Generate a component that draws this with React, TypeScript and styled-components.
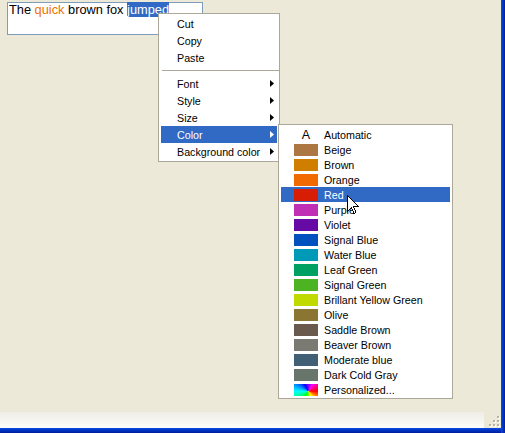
import React from "react";
import styled, { createGlobalStyle } from "styled-components";

const GlobalStyle = createGlobalStyle`
  html, body { margin: 0; padding: 0; background: #ECE9D8; }
  body { font-family: "Liberation Sans", Arial, sans-serif; }
  #root { width: 505px; height: 433px; }
`;

const Window = styled.div`
  position: relative;
  display: flex;
  width: 505px;
  height: 433px;
  overflow: hidden;
  background: #ece9d8;
`;

const Main = styled.div`
  flex: 1;
  display: flex;
  flex-direction: column;
`;

const Content = styled.div`
  flex: 1;
  padding: 2px 0 0 7px;
`;

const TextField = styled.div`
  box-sizing: border-box;
  width: 196px;
  height: 33px;
  border: 1px solid #7f9db9;
  background: #fff;
  padding: 0 1px;
  font-size: 12.8px;
  line-height: 14px;
  color: #000;
  white-space: nowrap;
`;

const Colored = styled.span<{ $color: string }>`
  color: ${(p) => p.$color};
`;

const Selected = styled.span`
  background: #316ac5;
  color: #fff;
`;

const StatusRow = styled.div`
  display: flex;
  height: 16px;
`;

const StatusPanel = styled.div`
  flex: 1;
  background: linear-gradient(#eeede6, #fdfdfa);
`;

const Grip = styled.div`
  width: 17px;
  display: flex;
  align-items: flex-end;
  justify-content: flex-end;
`;

const BottomBorder = styled.div`
  height: 5px;
  background: linear-gradient(#0a4ee0, #0035c8 40%, #001c9c);
`;

const RightBorder = styled.div`
  width: 4px;
  background: linear-gradient(to right, #0a4ee0, #0034c4 50%, #00209e);
`;

const Menu = styled.div<{ $left: number; $top: number; $width: number; $padTop: number }>`
  position: absolute;
  left: ${(p) => p.$left}px;
  top: ${(p) => p.$top}px;
  width: ${(p) => p.$width}px;
  box-sizing: border-box;
  background: #fff;
  border: 1px solid #aca899;
  padding: ${(p) => p.$padTop}px 2px 1px;
  font-size: 10.7px;
  color: #000;
`;

const MenuItem = styled.div<{ $active?: boolean }>`
  height: 17px;
  display: flex;
  align-items: center;
  justify-content: space-between;
  padding: 0 3px 0 16px;
  background: ${(p) => (p.$active ? "#316ac5" : "transparent")};
  color: ${(p) => (p.$active ? "#fff" : "#000")};
  white-space: nowrap;
`;

const Separator = styled.div`
  height: 9px;
  display: flex;
  align-items: center;
  margin-left: 1px;
  margin-right: -2px;
  &::after {
    content: "";
    flex: 1;
    height: 1px;
    background: #aca899;
  }
`;

const ColorItem = styled.div<{ $active?: boolean }>`
  height: 15px;
  display: flex;
  align-items: center;
  gap: 6px;
  padding-left: 13px;
  background: ${(p) => (p.$active ? "#316ac5" : "transparent")};
  color: ${(p) => (p.$active ? "#fff" : "#000")};
  white-space: nowrap;
`;

const Swatch = styled.div<{ $bg: string }>`
  width: 24px;
  height: 12px;
  background: ${(p) => p.$bg};
`;

const AutoGlyph = styled.div`
  width: 24px;
  height: 12px;
  display: flex;
  align-items: center;
  justify-content: center;
  font-size: 12.5px;
  line-height: 12px;
`;

const Cursor = styled.svg`
  position: absolute;
  left: 347px;
  top: 195px;
`;

const Arrow = ({ color }: { color: string }) => (
  <svg width="4" height="7" viewBox="0 0 4 7">
    <path d="M0 0 L4 3.5 L0 7 Z" fill={color} />
  </svg>
);

const colors: [string, string][] = [
  ["Beige", "#ad7743"],
  ["Brown", "#d07e00"],
  ["Orange", "#f06a00"],
  ["Red", "#d81d05"],
  ["Purple", "#c030b4"],
  ["Violet", "#650aa4"],
  ["Signal Blue", "#0050be"],
  ["Water Blue", "#009ab8"],
  ["Leaf Green", "#00a062"],
  ["Signal Green", "#4cb422"],
  ["Brillant Yellow Green", "#c0da00"],
  ["Olive", "#8a7632"],
  ["Saddle Brown", "#6a5a4e"],
  ["Beaver Brown", "#7a7a72"],
  ["Moderate blue", "#416075"],
  ["Dark Cold Gray", "#67756b"],
];

export default function App() {
  return (
    <>
      <GlobalStyle />
      <Window>
        <Main>
          <Content>
            <TextField>
              The <Colored $color="#f07000">quick</Colored> brown fox{" "}
              <Selected>jumped</Selected>
            </TextField>
          </Content>
          <StatusRow>
            <StatusPanel />
            <Grip>
              <svg width="13" height="13" viewBox="0 0 13 13">
                {[
                  [9, 1],
                  [5, 5],
                  [9, 5],
                  [1, 9],
                  [5, 9],
                  [9, 9],
                ].map(([x, y]) => (
                  <g key={`${x}-${y}`}>
                    <rect x={x + 1} y={y + 1} width="2" height="2" fill="#fff" />
                    <rect x={x} y={y} width="2" height="2" fill="#b8b4a2" />
                  </g>
                ))}
              </svg>
            </Grip>
          </StatusRow>
          <BottomBorder />
        </Main>
        <RightBorder />

        <Menu $left={158} $top={13} $width={122} $padTop={1}>
          <MenuItem>Cut</MenuItem>
          <MenuItem>Copy</MenuItem>
          <MenuItem>Paste</MenuItem>
          <Separator />
          <MenuItem>
            Font <Arrow color="#000" />
          </MenuItem>
          <MenuItem>
            Style <Arrow color="#000" />
          </MenuItem>
          <MenuItem>
            Size <Arrow color="#000" />
          </MenuItem>
          <MenuItem $active>
            Color <Arrow color="#fff" />
          </MenuItem>
          <MenuItem>
            Background color <Arrow color="#000" />
          </MenuItem>
        </Menu>

        <Menu $left={278} $top={124} $width={175} $padTop={2}>
          <ColorItem>
            <AutoGlyph>A</AutoGlyph>
            Automatic
          </ColorItem>
          {colors.map(([name, c]) => (
            <ColorItem key={name} $active={name === "Red"}>
              <Swatch $bg={c} />
              {name}
            </ColorItem>
          ))}
          <ColorItem>
            <Swatch $bg="conic-gradient(from 90deg at 60% 60%, #ff0000, #ffff00, #00ff00, #00ffff, #0000ff, #ff00ff, #ff0000)" />
            Personalized...
          </ColorItem>
        </Menu>

        <Cursor width="12" height="20" viewBox="0 0 12 20">
          <path
            d="M0.5 0.5 L0.5 16.5 L4.5 12.5 L7 18.5 L9 17.7 L6.6 11.6 L11.5 11.6 Z"
            fill="#fff"
            stroke="#000"
            strokeWidth="1"
            shapeRendering="crispEdges"
          />
        </Cursor>
      </Window>
    </>
  );
}
